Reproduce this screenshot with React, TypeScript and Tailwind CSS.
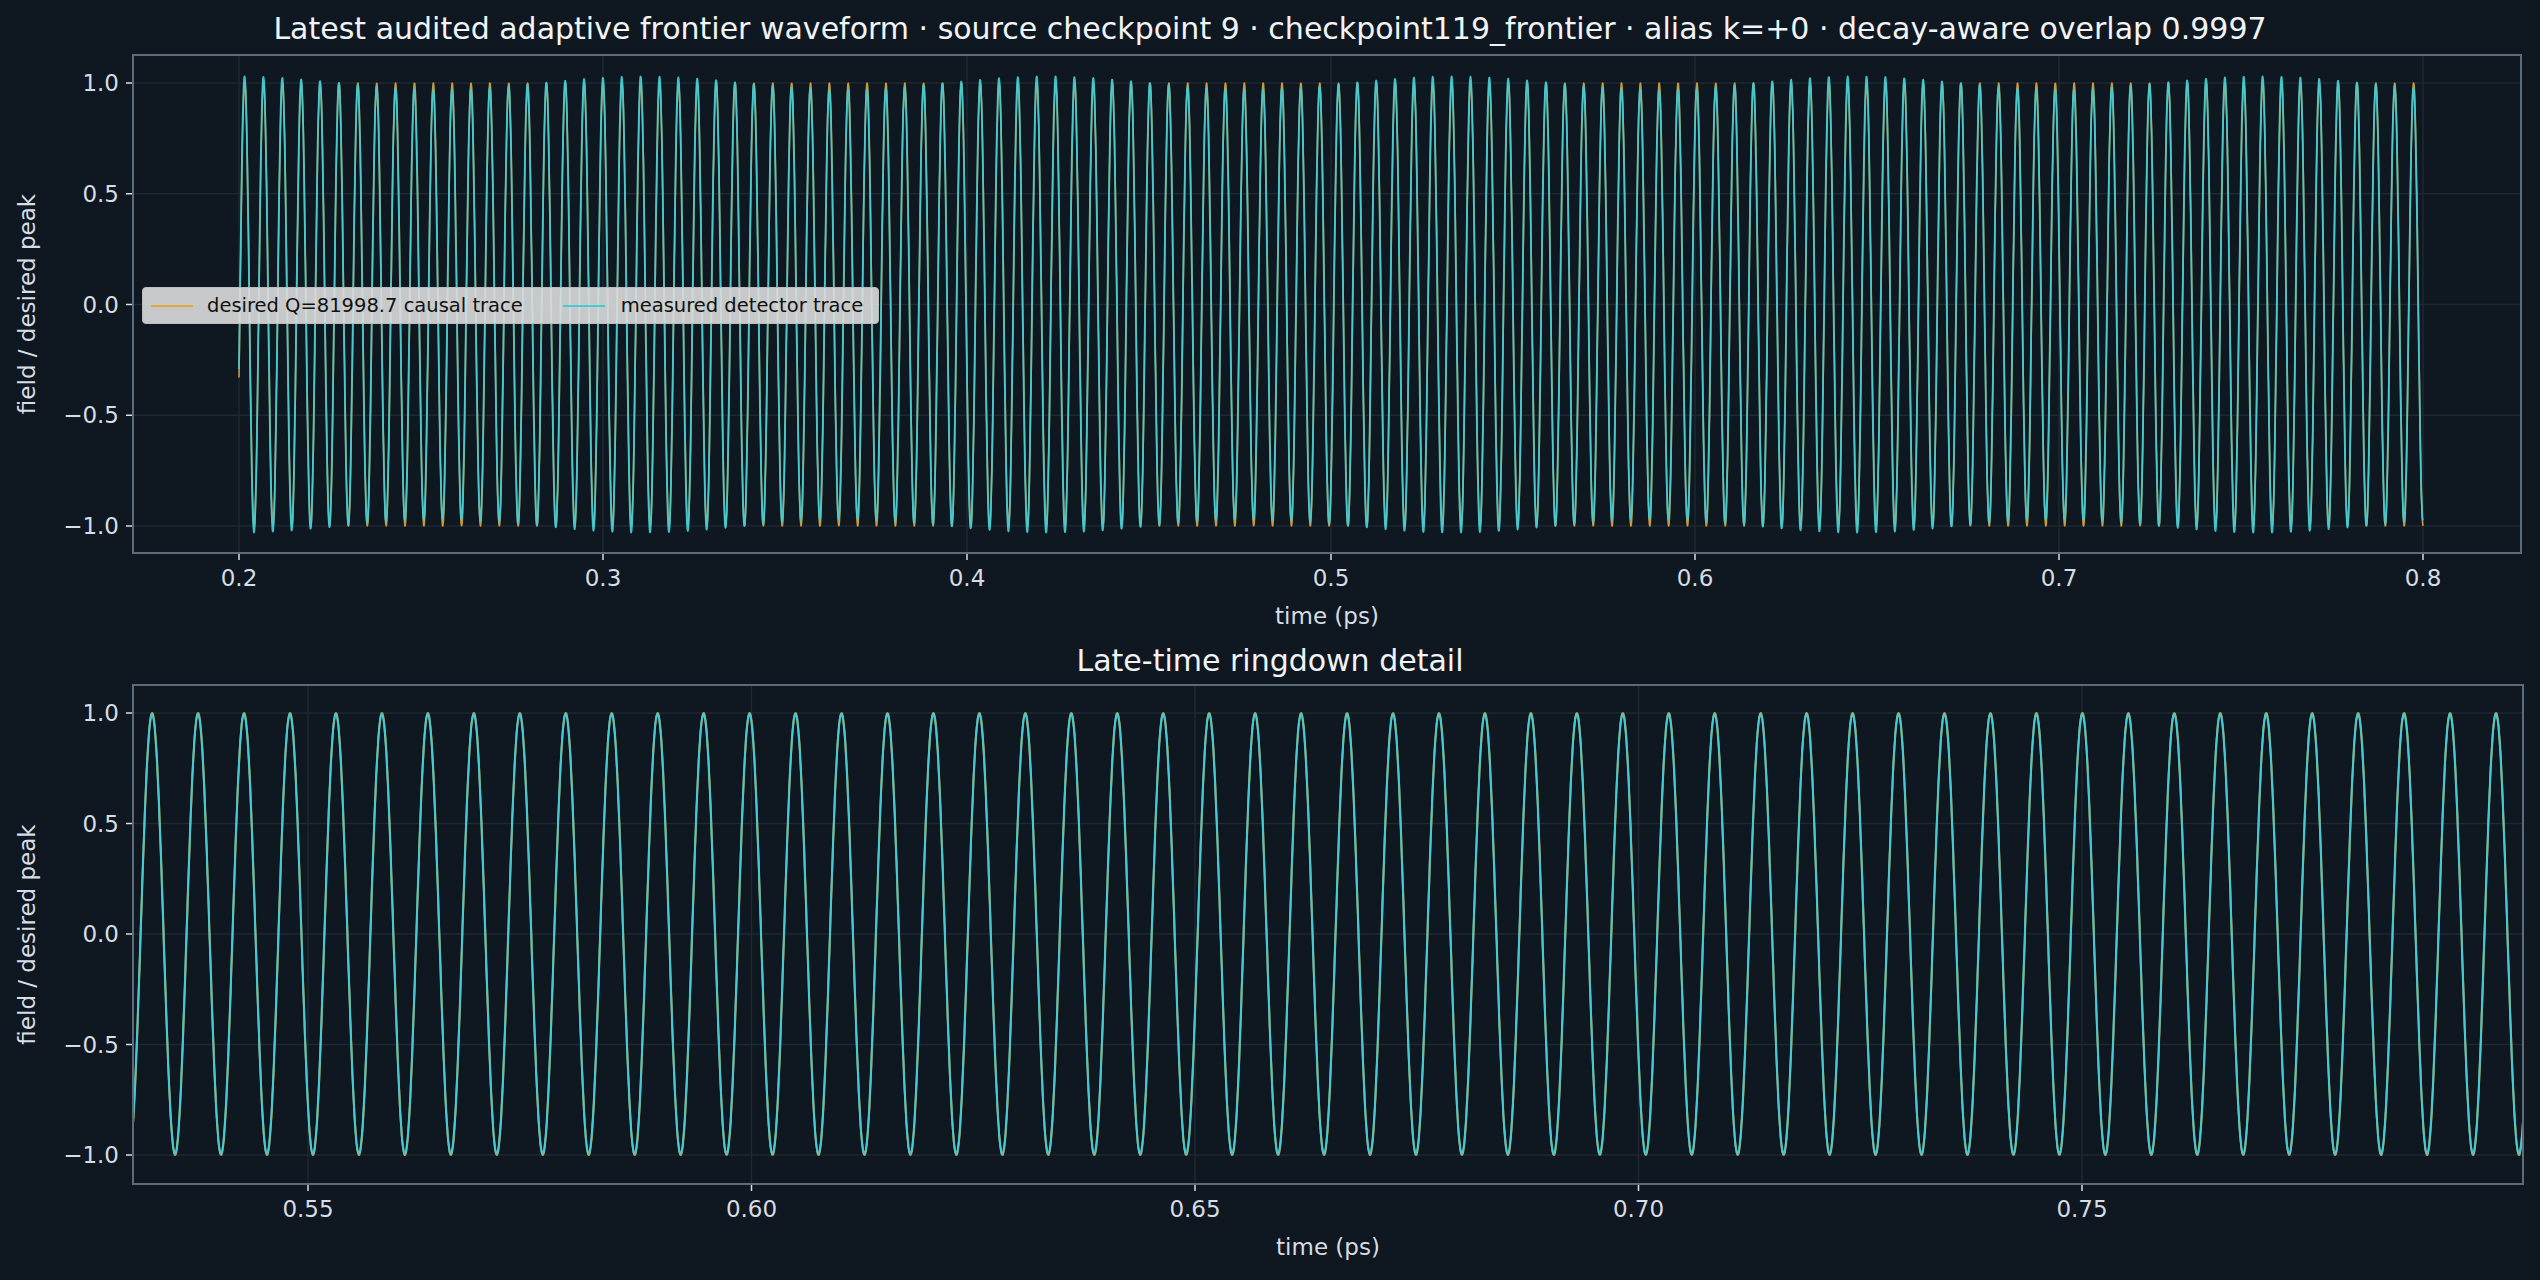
import React from 'react'

const BG = '#0f1720'
const FRAME = '#5c6b7a'
const GRID = '#1e2933'
const TICK = '#d6dde4'
const ORANGE = '#e0a93a'
const CYAN = '#45c9d2'
const FONT = '"DejaVu Sans", sans-serif'

const F = 193.0

function path(n: number, t0: number, t1: number, fx: (t: number) => number, fy: (t: number) => number, val: (t: number) => number) {
  let d = ''
  for (let i = 0; i <= n; i++) {
    const t = t0 + ((t1 - t0) * i) / n
    d += (i ? 'L' : 'M') + fx(t).toFixed(1) + ' ' + fy(val(t)).toFixed(1)
  }
  return d
}

type Axis = {
  left: number
  right: number
  top: number
  bottom: number
  y1: number
  ym1: number
  xt: (t: number) => number
  xticks: [number, string][]
}

function Frame({ a, xlabelY }: { a: Axis; xlabelY: number }) {
  const fy = (v: number) => a.ym1 + ((v + 1) / 2) * (a.y1 - a.ym1)
  const yt: [number, string][] = [
    [1, '1.0'],
    [0.5, '0.5'],
    [0, '0.0'],
    [-0.5, '−0.5'],
    [-1, '−1.0'],
  ]
  return (
    <g fontFamily={FONT}>
      {yt.map(([v]) => (
        <line key={'gy' + v} x1={a.left} x2={a.right} y1={fy(v)} y2={fy(v)} stroke={GRID} strokeWidth={1.5} />
      ))}
      {a.xticks.map(([t]) => (
        <line key={'gx' + t} x1={a.xt(t)} x2={a.xt(t)} y1={a.top} y2={a.bottom} stroke={GRID} strokeWidth={1.5} />
      ))}
      {yt.map(([v, s]) => (
        <g key={'ty' + v}>
          <line x1={a.left - 7} x2={a.left} y1={fy(v)} y2={fy(v)} stroke={TICK} strokeWidth={1.5} />
          <text x={a.left - 14} y={fy(v) + 8} fontSize={23} fill={TICK} textAnchor="end">
            {s}
          </text>
        </g>
      ))}
      {a.xticks.map(([t, s]) => (
        <g key={'tx' + t}>
          <line x1={a.xt(t)} x2={a.xt(t)} y1={a.bottom} y2={a.bottom + 7} stroke={TICK} strokeWidth={1.5} />
          <text x={a.xt(t)} y={a.bottom + 33} fontSize={23} fill={TICK} textAnchor="middle">
            {s}
          </text>
        </g>
      ))}
      <text x={(a.left + a.right) / 2} y={xlabelY} fontSize={23} fill={TICK} textAnchor="middle">
        time (ps)
      </text>
      <text
        x={0}
        y={0}
        fontSize={23}
        fill={TICK}
        textAnchor="middle"
        transform={`translate(35 ${(a.top + a.bottom) / 2}) rotate(-90)`}
      >
        field / desired peak
      </text>
    </g>
  )
}

export default function App() {
  const a1: Axis = {
    left: 133,
    right: 2521,
    top: 55,
    bottom: 553,
    y1: 83,
    ym1: 526,
    xt: (t) => 239 + (t - 0.2) * 3640,
    xticks: [0.2, 0.3, 0.4, 0.5, 0.6, 0.7, 0.8].map((t) => [t, t.toFixed(1)] as [number, string]),
  }
  const a2: Axis = {
    left: 133,
    right: 2523,
    top: 685,
    bottom: 1184,
    y1: 713,
    ym1: 1155,
    xt: (t) => 308 + (t - 0.55) * 8870,
    xticks: [0.55, 0.6, 0.65, 0.7, 0.75].map((t) => [t, t.toFixed(2)] as [number, string]),
  }
  const fy1 = (v: number) => a1.ym1 + ((v + 1) / 2) * (a1.y1 - a1.ym1)
  const fy2 = (v: number) => a2.ym1 + ((v + 1) / 2) * (a2.y1 - a2.ym1)
  const w = 2 * Math.PI * F
  const d1 = path(7000, 0.2, 0.8, a1.xt, fy1, (t) => Math.cos(w * (t - 0.2) - 1.907))
  const m1 = path(
    7000,
    0.2,
    0.8,
    a1.xt,
    fy1,
    (t) => (1 + 0.03 * Math.cos(2 * Math.PI * 9 * (t - 0.2))) * Math.cos(w * (t - 0.2) - 1.907 + 0.05)
  )
  const t2a = 0.5303
  const t2b = 0.7997
  const d2 = path(5000, t2a, t2b, a2.xt, fy2, (t) => Math.cos(w * (t - 0.79668)))
  const m2 = path(5000, t2a, t2b, a2.xt, fy2, (t) => 0.995 * Math.cos(w * (t - 0.79668) + 0.02))

  return (
    <div className="w-[2540px] h-[1280px] flex flex-col overflow-hidden" style={{ background: BG, fontFamily: FONT }}>
      <div className="h-[50px] flex items-center justify-center text-[30px] text-[#f1f4f7] pt-[6px]">
        Latest audited adaptive frontier waveform · source checkpoint 9 · checkpoint119_frontier · alias k=+0 · decay-aware overlap 0.9997
      </div>
      <div className="relative h-[590px]">
        <svg width={2540} height={590} viewBox="0 50 2540 590" className="block">
          <defs>
            <clipPath id="c1">
              <rect x={a1.left} y={a1.top} width={a1.right - a1.left} height={a1.bottom - a1.top} />
            </clipPath>
          </defs>
          <Frame a={a1} xlabelY={624} />
          <g clipPath="url(#c1)" fill="none" strokeLinejoin="round">
            <path d={d1} stroke={ORANGE} strokeWidth={1.6} opacity={0.9} />
            <path d={m1} stroke={CYAN} strokeWidth={1.8} opacity={0.95} />
          </g>
          <rect x={a1.left} y={a1.top} width={a1.right - a1.left} height={a1.bottom - a1.top} fill="none" stroke={FRAME} strokeWidth={2} />
        </svg>
        <div className="absolute left-[142px] top-[237px] w-[737px] h-[37px] rounded-[4px] bg-[#dcdcdc]/90 border border-[#bdbdbd] flex items-center text-[19.5px] text-[#111] px-[8px] whitespace-nowrap">
          <span className="w-[42px] h-[2px] bg-[#e0a93a] mr-[14px] shrink-0" />
          <span>desired Q=81998.7 causal trace</span>
          <span className="w-[42px] h-[2px] bg-[#45c9d2] ml-[40px] mr-[16px] shrink-0" />
          <span>measured detector trace</span>
        </div>
      </div>
      <div className="h-[40px] flex items-center justify-center text-[30px] text-[#f1f4f7]">Late-time ringdown detail</div>
      <svg width={2540} height={600} viewBox="0 680 2540 600" className="block">
        <defs>
          <clipPath id="c2">
            <rect x={a2.left} y={a2.top} width={a2.right - a2.left} height={a2.bottom - a2.top} />
          </clipPath>
        </defs>
        <Frame a={a2} xlabelY={1255} />
        <g clipPath="url(#c2)" fill="none" strokeLinejoin="round">
          <path d={d2} stroke={ORANGE} strokeWidth={2} opacity={0.9} />
          <path d={m2} stroke={CYAN} strokeWidth={2} />
        </g>
        <rect x={a2.left} y={a2.top} width={a2.right - a2.left} height={a2.bottom - a2.top} fill="none" stroke={FRAME} strokeWidth={2} />
      </svg>
    </div>
  )
}
